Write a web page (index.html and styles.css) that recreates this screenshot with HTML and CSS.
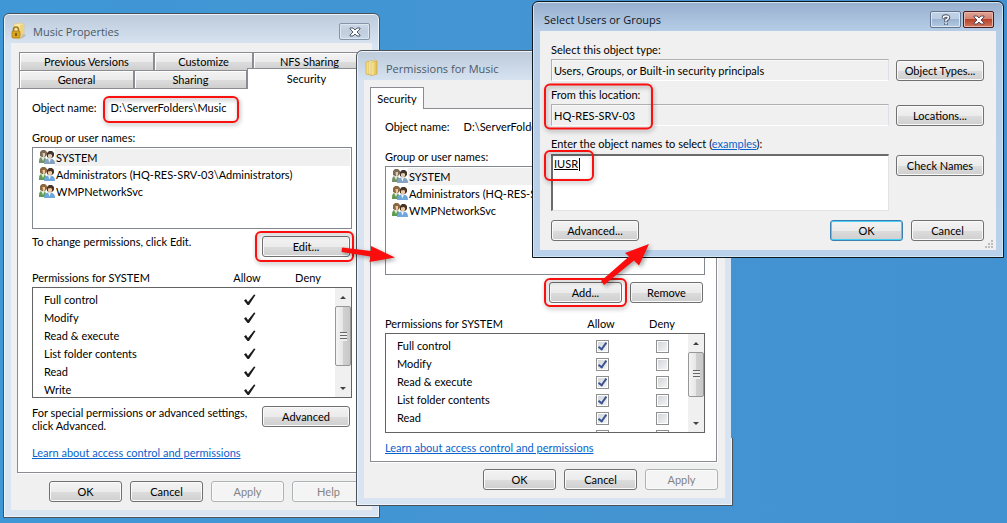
FILE: index.html
```html
<!DOCTYPE html>
<html lang="en">
<head>
<meta charset="utf-8">
<title>Folder permissions</title>
<link rel="stylesheet" href="styles.css">
</head>
<body>
<svg class="defs" aria-hidden="true">
  <defs>
    <linearGradient id="folderFill" x1="0" x2="1"><stop offset="0" stop-color="#fbeea6"/><stop offset="1" stop-color="#dfb94a"/></linearGradient>
    <symbol id="users" viewBox="0 0 17 16">
      <path d="M1 14c0-3 0-5 2-6h4l2 6z" fill="#5f9b51"/>
      <path d="M3 8l2 4 2-4z" fill="#dfe8d2"/>
      <path d="M2 7V3l2-2h3l2 2v3L7 8H4z" class="hair"/>
      <path d="M4.500 4H7v3L6 8H5z" class="face"/>
      <path d="M6 15c0-3 1-5 4-5.500h3c3 .5 4 2.500 4 5.500z" fill="#6ea6de"/>
      <path d="M10 9.500l1.500 4L13 9.500z" fill="#eef6ff"/>
      <path d="M9 8V4l2-2h3l2 2v3l-2 2h-3z" class="hair2"/>
      <path d="M10 5.500l3-.5 1 1v2l-1 1.500h-2L10 8z" class="face"/>
    </symbol>
    <symbol id="folder" viewBox="0 0 16 18">
      <path d="M2 3l5-1v14l-5-1z" fill="#f3dc83" stroke="#c9a444" stroke-width=".6"/>
      <path d="M5 2l7-1v13l-7 2z" fill="#fbf1ba" stroke="#d3b45a" stroke-width=".6"/>
      <path d="M7 3l6-1v13l-6 2z" fill="url(#folderFill)" stroke="#cda843" stroke-width=".6"/>
    </symbol>
    <symbol id="tick" viewBox="0 0 12 12">
      <path d="M0 6.500 2 5l2 3L10 .5l1.500.5L5 11H3.500z" fill="#1c1c1c"/>
    </symbol>
  </defs>
</svg>

<main class="desktop">

<section class="window properties" aria-label="Music Properties">
  <header class="titlebar">
    <svg class="title-icon" viewBox="0 0 16 18" aria-hidden="true">
      <path d="M3 2l7-1 3 1v13l-6 2-4-1z" fill="#f8e9ab" stroke="#dcc37b" stroke-width=".6"/>
      <path d="M9 3l4-1v10l-4 2z" fill="#ecd380"/>
      <path d="M11 12l4 1-2 2-4 2z" fill="#8d98a3" opacity=".45"/>
      <path d="M2.500 10V7.500a2.500 2.500 0 0 1 5 0V10" fill="none" stroke="#a67a16" stroke-width="1.600"/>
      <rect x="1" y="9" width="8" height="7" rx="1" fill="#d9a521" stroke="#9b6d10" stroke-width=".6"/>
      <path d="M5 11v3" stroke="#6b4a08" stroke-width="1.500"/>
    </svg>
    <h1>Music Properties</h1>
    <button class="caption" aria-label="Close"><svg viewBox="0 0 12 10"><path d="M1 1h3l2 2 2-2h3v1L8 5l3 3v1H8L6 7 4 9H1V8l3-3-3-3z" fill="#fff" stroke="#51586a"/></svg></button>
  </header>
  <div class="client">
    <div class="tabs" role="tablist">
      <div class="tab-row back">
        <button class="tab" role="tab">Previous Versions</button>
        <button class="tab" role="tab">Customize</button>
        <button class="tab" role="tab">NFS Sharing</button>
      </div>
      <div class="tab-row front">
        <button class="tab" role="tab">General</button>
        <button class="tab" role="tab">Sharing</button>
        <button class="tab selected" role="tab" aria-selected="true">Security</button>
      </div>
    </div>
    <div class="panel">
      <p class="object">Object name: <span>D:\ServerFolders\Music</span></p>
      <p class="label">Group or user names:</p>
      <ul class="list">
        <li class="current"><svg class="gray"><use href="#users"/></svg><span>SYSTEM</span></li>
        <li><svg><use href="#users"/></svg><span>Administrators (HQ-RES-SRV-03\Administrators)</span></li>
        <li><svg><use href="#users"/></svg><span>WMPNetworkSvc</span></li>
      </ul>
      <div class="edit-row"><p>To change permissions, click Edit.</p><button class="btn wide">Edit...</button></div>
      <div class="perm-head"><span>Permissions for SYSTEM</span><span>Allow</span><span>Deny</span></div>
      <div class="perm-box">
        <table class="perms" aria-label="Permissions for SYSTEM">
          <tr><th scope="row">Full control</th><td><svg><use href="#tick"/></svg></td><td></td></tr>
          <tr><th scope="row">Modify</th><td><svg><use href="#tick"/></svg></td><td></td></tr>
          <tr><th scope="row">Read &amp; execute</th><td><svg><use href="#tick"/></svg></td><td></td></tr>
          <tr><th scope="row">List folder contents</th><td><svg><use href="#tick"/></svg></td><td></td></tr>
          <tr><th scope="row">Read</th><td><svg><use href="#tick"/></svg></td><td></td></tr>
          <tr><th scope="row">Write</th><td><svg><use href="#tick"/></svg></td><td></td></tr>
        </table>
        <div class="scroll" aria-hidden="true"><i class="up"></i><i class="thumb tall"></i><i class="down"></i></div>
      </div>
      <div class="advanced-row"><p>For special permissions or advanced settings, click Advanced.</p><button class="btn wide">Advanced</button></div>
      <p class="learn"><a href="#learn">Learn about access control and permissions</a></p>
    </div>
    <footer class="actions">
      <button class="btn">OK</button><button class="btn">Cancel</button><button class="btn" disabled>Apply</button><button class="btn" disabled>Help</button>
    </footer>
  </div>
</section>

<section class="window permissions" aria-label="Permissions for Music">
  <header class="titlebar">
    <svg class="title-icon" aria-hidden="true"><use href="#folder"/></svg>
    <h1>Permissions for Music</h1>
  </header>
  <div class="client">
    <div class="tabs" role="tablist"><button class="tab selected single" role="tab" aria-selected="true">Security</button></div>
    <div class="panel">
      <p class="object">Object name: <span>D:\ServerFolders\Music</span></p>
      <p class="label">Group or user names:</p>
      <ul class="list">
        <li class="current"><svg class="gray"><use href="#users"/></svg><span>SYSTEM</span></li>
        <li><svg><use href="#users"/></svg><span>Administrators (HQ-RES-SRV-03\Administrators)</span></li>
        <li><svg><use href="#users"/></svg><span>WMPNetworkSvc</span></li>
      </ul>
      <div class="add-row"><button class="btn">Add...</button><button class="btn">Remove</button></div>
      <div class="perm-head"><span>Permissions for SYSTEM</span><span>Allow</span><span>Deny</span></div>
      <div class="perm-box">
        <table class="perms" aria-label="Permissions for SYSTEM">
          <tr><th scope="row">Full control</th><td><input type="checkbox" aria-label="Allow full control" checked></td><td><input type="checkbox" aria-label="Deny full control"></td></tr>
          <tr><th scope="row">Modify</th><td><input type="checkbox" aria-label="Allow modify" checked></td><td><input type="checkbox" aria-label="Deny modify"></td></tr>
          <tr><th scope="row">Read &amp; execute</th><td><input type="checkbox" aria-label="Allow read and execute" checked></td><td><input type="checkbox" aria-label="Deny read and execute"></td></tr>
          <tr><th scope="row">List folder contents</th><td><input type="checkbox" aria-label="Allow list folder contents" checked></td><td><input type="checkbox" aria-label="Deny list folder contents"></td></tr>
          <tr><th scope="row">Read</th><td><input type="checkbox" aria-label="Allow read" checked></td><td><input type="checkbox" aria-label="Deny read"></td></tr>
          <tr><th scope="row"></th><td><input type="checkbox" aria-label="Allow write"></td><td><input type="checkbox" aria-label="Deny write"></td></tr>
        </table>
        <div class="scroll" aria-hidden="true"><i class="up"></i><i class="thumb"></i><i class="down"></i></div>
      </div>
      <p class="learn"><a href="#learn">Learn about access control and permissions</a></p>
    </div>
    <footer class="actions">
      <button class="btn">OK</button><button class="btn">Cancel</button><button class="btn" disabled>Apply</button>
    </footer>
  </div>
</section>

<section class="window select" aria-label="Select Users or Groups">
  <header class="titlebar">
    <h1>Select Users or Groups</h1>
    <button class="caption help" aria-label="Help"><svg viewBox="0 0 12 12"><path d="M3.500 4.500V3.500Q3.500 2 6 2t2.500 1.500Q8.500 5 6 6v2M6 9v2" fill="none" stroke="#4a5566" stroke-width="3.400"/><path d="M3.500 4V3.500Q3.500 2 6 2t2.500 1.500Q8.500 5 6 6v1.500M6 9v1.500" fill="none" stroke="#fff" stroke-width="1.600"/></svg></button>
    <button class="caption close" aria-label="Close"><svg viewBox="0 0 12 10"><path d="M1 1h3l2 2 2-2h3v1L8 5l3 3v1H8L6 7 4 9H1V8l3-3-3-3z" fill="#fff" stroke="#5b4a55"/></svg></button>
  </header>
  <div class="client">
    <div class="fields">
      <label for="type">Select this object type:</label>
      <input id="type" class="field" readonly value="Users, Groups, or Built-in security principals">
      <button class="btn wide">Object Types...</button>
      <label for="location">From this location:</label>
      <input id="location" class="field" readonly value="HQ-RES-SRV-03">
      <button class="btn wide">Locations...</button>
      <label for="names" class="names-label">Enter the object names to select (<a href="#examples">examples</a>):</label>
      <div class="names"><textarea id="names" spellcheck="false">IUSR</textarea><i class="caret"></i></div>
      <button class="btn wide">Check Names</button>
    </div>
    <footer class="select-actions">
      <button class="btn wide">Advanced...</button><button class="btn primary">OK</button><button class="btn">Cancel</button>
    </footer>
    <svg class="grip" viewBox="0 0 9 9" aria-hidden="true"><path d="M6 0h2v2H6zM3 3h2v2H3zM6 3h2v2H6zM0 6h2v2H0zM3 6h2v2H3zM6 6h2v2H6z" fill="#bdbdbd"/></svg>
  </div>
</section>

<svg class="marks" viewBox="0 0 1007 523" aria-hidden="true">
  <g class="frames">
    <rect x="104" y="97" width="134" height="25" rx="5"/>
    <rect x="256" y="232" width="97" height="29" rx="5"/>
    <rect x="545" y="84.500" width="107" height="44" rx="5"/>
    <rect x="545" y="151" width="48" height="29" rx="5"/>
    <rect x="545" y="279" width="81" height="27" rx="5"/>
  </g>
  <g class="arrows">
    <path d="M342 247.500 371 251V246L395 257.500 369.500 262 370.500 256.500 341.500 252z"/>
    <path d="M601 281 629 256.500 625 253 649 244 639 265.500 634 260.500 604 285z"/>
  </g>
</svg>
</main>
</body>
</html>
```
FILE: styles.css
```css
* { box-sizing: border-box; }

body {
  margin: 0;
  font: 11px/16px Lato, "Liberation Sans", sans-serif;
  color: #000;
}

p, ul, h1 { margin: 0; padding: 0; }
button, input, textarea { font: inherit; color: inherit; }
a { color: #0a62cc; }
.defs { position: absolute; width: 0; height: 0; }

.desktop {
  position: relative;
  min-height: 100vh;
  overflow: hidden;
  background: linear-gradient(90deg, #3f97d5, #4494d2 60%, #4292d2);
}

/* Windows */
.window {
  position: absolute;
  padding: 0 7px 7px;
  border: 1px solid #4b5158;
  border-radius: 6px 6px 0 0;
  background: linear-gradient(#bccada, #d7e3f1 30px, #d9e4f2 31px);
  box-shadow: inset 0 0 0 1px #edf3fa;
}
.properties { left: 3px; top: 13px; width: 377px; }
.permissions { left: 356px; top: 50px; width: 377px; }
.select {
  left: 532px; top: 1px; width: 472px;
  border-color: #10171f;
  background: linear-gradient(#97afcd, #b6cde8 29px, #b9d1ea);
  box-shadow: inset 0 0 0 1px #cfe6f4;
}
.permissions::after {
  content: "";
  position: absolute;
  top: 200px; right: -1px;
  width: 2px; height: 187px;
  background: #4494d2;
}

.titlebar { display: flex; align-items: center; height: 29px; }
.titlebar h1 {
  flex: 1;
  padding-top: 6px;
  font: 11px/18px "Open Sans", "Noto Sans", sans-serif;
  color: #4c5966;
}
.title-icon { width: 16px; height: 18px; margin: 5px 6px 0 0; }
.select .titlebar h1 { padding-left: 4px; color: #10161c; }

.caption {
  display: grid;
  place-items: center;
  width: 31px; height: 17px;
  margin: 6px 2px 0 0;
  padding: 0;
  border: 1px solid #8595a9;
  border-radius: 2px;
  background: linear-gradient(#cbd8e6, #bfcddd 50%, #c8d6e5);
  box-shadow: inset 0 0 0 1px #dce7f2;
}
.caption svg { width: 12px; height: 10px; }
.caption.help { background: linear-gradient(#bfd1e6, #bacde4 45%, #9cb4d0 50%, #b3cae4); border-color: #62758e; }
.caption.help svg { height: 12px; }
.caption.close { background: linear-gradient(#e0a396, #d38472 45%, #b8422a 50%, #cf765c); border-color: #4a1a1f; box-shadow: inset 0 0 0 1px #e8b6a9; }

.client { background: #f0f0f0; padding: 9px 6px 8px; }
.permissions .client { padding: 7px 8px 8px 6px; }

/* Tabs */
.tab {
  flex: 1;
  height: 18px;
  padding: 0;
  border: 1px solid #8b8c91;
  border-width: 1px 1px 0 1px;
  background: linear-gradient(#f3f3f3, #ebebeb 50%, #dcdcdc 55%, #cfcfcf);
  box-shadow: inset 1px 1px #fff;
}
.tab-row { display: flex; }
.properties .tabs { padding-left: 2px; }
.back .tab:first-child { flex: 0 0 135px; }
.back .tab:nth-child(2) { flex: 0 0 99px; }
.front .tab:first-child { flex: 0 0 115px; }
.front .tab:nth-child(2) { flex: 0 0 113px; }
.front { align-items: flex-end; }
.tab.selected {
  position: relative;
  height: 21px;
  margin: -2px 0 -1px;
  background: #fff;
  box-shadow: none;
}
.tab.single { display: block; width: 54px; height: 22px; margin: 0 0 -1px; }
.panel {
  padding: 11px 14px 10px;
  border: 1px solid #8b8c91;
  background: #fff;
  box-shadow: 1px 1px #fff;
}
.permissions .panel { padding: 10px 11px 5px 14px; }
.properties .panel { padding-right: 13px; }

.object { display: flex; }
.object span { margin-left: 14px; }
.label { margin-top: 14px; }

.list {
  height: 82px;
  margin-top: 1px;
  padding: 1px;
  border: 1px solid #828790;
  list-style: none;
}
.permissions .list { height: 109px; }
.list li { display: flex; height: 17px; padding-left: 4px; line-height: 17px; white-space: nowrap; }
.list svg { flex: none; width: 17px; height: 16px; }
.list span { flex: 1; padding-left: 1px; overflow: hidden; }
.current span { background: #f0f0f0; }
.hair, .hair2 { fill: #8b6840; }
.hair2 { fill: #4a3427; }
.face { fill: #edc8a0; }
.gray { filter: saturate(.55); }

/* Buttons */
.btn {
  width: 73px; height: 21px;
  padding: 0;
  border: 1px solid #707070;
  border-radius: 3px;
  background: linear-gradient(#f3f3f3, #ebebeb 50%, #dcdcdc 52%, #cfcfcf);
  box-shadow: inset 0 0 0 1px #fafafa;
  line-height: 18px;
}
.btn.wide { width: 88px; flex: none; }
.btn:disabled { border-color: #adb2b5; background: #f4f4f4; color: #838383; }
.btn.primary { border-color: #3c7fb1; box-shadow: inset 0 0 0 1px #46d0f8; }

.edit-row, .advanced-row { display: flex; justify-content: space-between; padding-right: 2px; }
.edit-row { margin-top: 5px; }
.edit-row .btn { margin-top: 2px; }
.advanced-row { margin-top: 8px; }
.advanced-row p { line-height: 13px; width: 224px; }
.add-row { display: flex; justify-content: flex-end; gap: 8px; margin-top: 7px; padding-right: 2px; }
.actions { display: flex; justify-content: flex-end; gap: 8px; margin: 8px 1px 0 0; }
.permissions .actions { margin: 7px -1px 0 0; }

/* Permission table */
.perm-head { display: grid; grid-template-columns: 1fr 60px 62px 13px; margin-top: 13px; }
.perm-head span + span { text-align: center; }
.perm-box { display: flex; height: 111px; margin-top: 1px; border: 1px solid #646464; overflow: hidden; }
.permissions .perm-box { height: 100px; }
.perms { flex: 1; margin-top: 3px; border-collapse: collapse; align-self: flex-start; table-layout: fixed; }
.perms th { height: 18px; padding: 0 0 0 11px; font-weight: 400; text-align: left; }
.perms td { width: 69px; height: 18px; padding: 0; }
.perms td:last-child { width: 51px; }
.perms svg { display: block; width: 12px; height: 12px; margin: 0 auto; }
.permissions .perm-head { grid-template-columns: 1fr 60px 62px 12px; }
.perms input {
  appearance: none;
  display: block;
  position: relative;
  width: 13px; height: 13px;
  margin: 0 auto;
  padding: 1px;
  border: 1px solid #8e8f8f;
  background: linear-gradient(135deg, #cfd3d8, #f6f6f6);
  background-clip: content-box;
}
.perms input:checked::after {
  content: "";
  position: absolute;
  left: 3px; top: 0;
  width: 3px; height: 7px;
  border: solid #3c5393;
  border-width: 0 2px 2px 0;
  transform: rotate(35deg);
}

.scroll { display: flex; flex-direction: column; width: 16px; background: #f0f0f0; }
.scroll i { display: block; }
.up, .down { flex: 0 0 18px; position: relative; }
.up::after, .down::after {
  content: "";
  display: block;
  width: 0;
  margin: 8px auto 0;
  border: 3px solid transparent;
  border-top-width: 0;
  border-bottom-color: #404040;
}
.down { margin-top: auto; }
.down::after { border-width: 3px 3px 0; border-top-color: #404040; }
.thumb {
  height: 45px;
  border: 1px solid #979797;
  border-radius: 2px;
  background:
    repeating-linear-gradient(#666 0 1px, #eee 1px 3px) center / 7px 9px no-repeat,
    linear-gradient(90deg, #f4f4f4, #e6e6e6 48%, #d0d0d0 52%, #c8c8c8);
}
.thumb.tall { height: 60px; }

.advanced-row + .learn { margin: 13px 0 1px; }
.permissions .learn { margin-top: 7px; }

/* Select Users or Groups */
.select .client { position: relative; padding: 11px 12px 9px 11px; }
.fields { display: grid; grid-template-columns: 1fr 88px; column-gap: 7px; }
.fields label { grid-column: 1 / -1; }
.fields .btn { margin-top: 3px; }
.field {
  min-width: 0;
  height: 22px;
  margin: 1px 0 6px;
  padding: 0 2px;
  border: 1px solid;
  border-color: #b0b0b0 #dfdfe8 #fff #b0b0b0;
  background: #f0f0f0;
  box-shadow: inset 1px 1px #f8f8f8;
  outline: 0;
}
.fields .field + .btn { margin-top: 2px; }
.fields .names-label { margin-top: 4px; }
.names { position: relative; margin-top: 2px; }
.names textarea {
  display: block;
  width: 100%; height: 57px;
  padding: 0 1px;
  border: 2px solid;
  border-color: #6b6b6b #e3e3e3 #e3e3e3 #6b6b6b;
  border-right-width: 1px;
  border-bottom-width: 1px;
  background: #fff;
  text-decoration: underline;
  resize: none;
  outline: 0;
}
.caret { position: absolute; left: 28px; top: 4px; width: 1px; height: 13px; background: #000; }
.select-actions { display: flex; gap: 8px; margin-top: 9px; }
.select-actions .wide { margin-right: auto; }
.grip { position: absolute; right: 2px; bottom: 1px; width: 9px; height: 9px; }

/* Red callouts */
.marks { position: absolute; left: 0; top: 0; width: 1007px; height: 523px; pointer-events: none; }
.frames { fill: none; stroke: #fb1010; stroke-width: 2; filter: drop-shadow(1px 2px 2px rgba(0, 0, 0, .35)); }
.arrows { fill: #fb0d0d; filter: drop-shadow(2px 2px 2px rgba(0, 0, 0, .35)); }
```
